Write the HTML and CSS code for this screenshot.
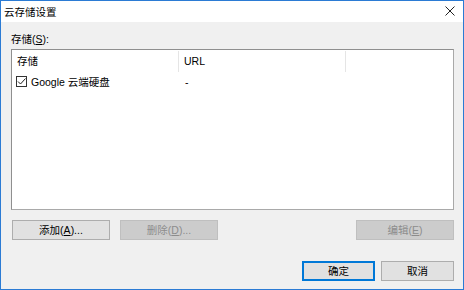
FILE: index.html
```html
<!DOCTYPE html>
<html lang="zh-CN">
<head>
  <meta charset="UTF-8" />
  <title>云存储设置</title>
  <link rel="stylesheet" href="styles.css">
</head>
<body>

  <div class="window">
    <!-- Title bar -->
    <div class="titlebar">
      <span class="title">云存储设置</span>
      <svg class="close" width="10" height="10" viewBox="0 0 10 10">
        <path d="M0.5 0.5 L9.5 9.5 M9.5 0.5 L0.5 9.5" stroke="#222" stroke-width="1" fill="none"/>
      </svg>
    </div>

    <div class="content">
      <div class="label">存储(<u>S</u>):</div>

      <div class="listbox">
        <div class="list-header">
          <div class="col col-name">存储</div>
          <div class="col col-url">URL</div>
          <div class="col col-rest"></div>
        </div>
        <div class="list-row">
          <div class="cell cell-name">
            <span class="checkbox">
              <svg width="9" height="9" viewBox="0 0 9 9">
                <path d="M1 4.5 L3.5 7 L8.5 1.5" stroke="#222" stroke-width="1" fill="none"/>
              </svg>
            </span>
            Google 云端硬盘
          </div>
          <div class="cell cell-url">-</div>
        </div>
      </div>

      <div class="button-row">
        <button class="btn wide">添加(<u>A</u>)...</button>
        <button class="btn wide" disabled>删除(<u>D</u>)...</button>
        <span class="spacer"></span>
        <button class="btn wide" disabled>编辑(<u>E</u>)</button>
      </div>

      <div class="dialog-buttons">
        <button class="btn default">确定</button>
        <button class="btn">取消</button>
      </div>
    </div>
  </div>

</body>
</html>
```

FILE: styles.css
```css
* {
  margin: 0;
  padding: 0;
  box-sizing: border-box;
}

body {
  font-family: "Liberation Sans", "Noto Sans CJK SC", sans-serif;
  font-size: 10.5px;
  color: #000;
  background: #f0f0f0;
}

.window {
  width: 464px;
  height: 290px;
  border: 1px solid #2b7bd4;
  background: #f0f0f0;
  display: flex;
  flex-direction: column;
}

.titlebar {
  height: 21px;
  background: #fff;
  display: flex;
  align-items: center;
  padding-left: 3px;
  padding-right: 8px;
}

.title {
  flex: 1;
  line-height: 16px;
  color: #000;
}

.close {
  display: block;
  margin-bottom: 2px;
}

.content {
  flex: 1;
  display: flex;
  flex-direction: column;
  padding: 9px 9px 0 10px;
}

.label {
  line-height: 16px;
  margin-bottom: 2px;
}

u {
  text-decoration: underline;
  text-underline-offset: 1px;
}

.listbox {
  height: 161px;
  background: #fff;
  border: 1px solid #8f8f8f;
  border-right-color: #a9a9a9;
  border-bottom-color: #a9a9a9;
}

.list-header {
  display: flex;
  height: 22px;
  margin-top: 1px;
}

.col {
  line-height: 21px;
  padding-left: 5px;
  border-right: 1px solid #e5e5e5;
  height: 21px;
}

.col-name {
  width: 167px;
}

.col-url {
  width: 167px;
}

.col-rest {
  width: 0;
  border-right: none;
}

.list-row {
  display: flex;
  height: 17px;
  align-items: center;
}

.cell {
  line-height: 16px;
}

.cell-name {
  width: 167px;
  padding-left: 4px;
  display: flex;
  align-items: center;
  gap: 4px;
}

.cell-url {
  padding-left: 6px;
}

.checkbox {
  width: 11px;
  height: 11px;
  border: 1px solid #333;
  background: #fff;
  display: flex;
  align-items: center;
  justify-content: center;
}

.checkbox svg {
  display: block;
}

.button-row {
  display: flex;
  margin-top: 10px;
  gap: 10px;
  padding-left: 1px;
}

.spacer {
  flex: 1;
}

.btn {
  font-family: "Liberation Sans", "Noto Sans CJK SC", sans-serif;
  font-size: 10.5px;
  height: 20px;
  line-height: 16px;
  background: #e1e1e1;
  border: 1px solid #adadad;
  color: #000;
  width: 73px;
}

.btn.wide {
  width: 98px;
}

.btn:disabled {
  background: #cccccc;
  border-color: #bfbfbf;
  color: #8c8c8c;
}

.btn.default {
  border: 1px solid #0078d7;
  box-shadow: inset 0 0 0 1px #0078d7;
}

.dialog-buttons {
  display: flex;
  justify-content: flex-end;
  gap: 6px;
  margin-top: 21px;
}
```
